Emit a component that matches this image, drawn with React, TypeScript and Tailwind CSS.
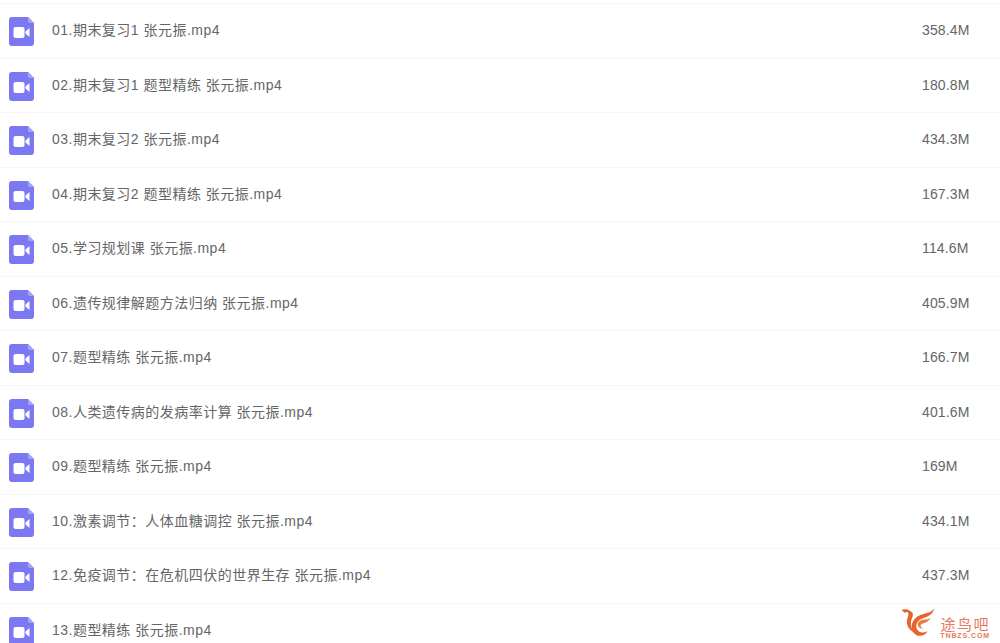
const files = [
  { name: "01.期末复习1 张元振.mp4", size: "358.4M" },
  { name: "02.期末复习1 题型精练 张元振.mp4", size: "180.8M" },
  { name: "03.期末复习2 张元振.mp4", size: "434.3M" },
  { name: "04.期末复习2 题型精练 张元振.mp4", size: "167.3M" },
  { name: "05.学习规划课 张元振.mp4", size: "114.6M" },
  { name: "06.遗传规律解题方法归纳 张元振.mp4", size: "405.9M" },
  { name: "07.题型精练 张元振.mp4", size: "166.7M" },
  { name: "08.人类遗传病的发病率计算 张元振.mp4", size: "401.6M" },
  { name: "09.题型精练 张元振.mp4", size: "169M" },
  { name: "10.激素调节：人体血糖调控 张元振.mp4", size: "434.1M" },
  { name: "12.免疫调节：在危机四伏的世界生存 张元振.mp4", size: "437.3M" },
  { name: "13.题型精练 张元振.mp4", size: "" },
]

const VideoIcon = () => (
  <svg width="25" height="29" viewBox="0 0 25 29" className="mt-[2px] shrink-0">
    <path d="M3 0H19L25 6V26a3 3 0 0 1-3 3H3a3 3 0 0 1-3-3V3a3 3 0 0 1 3-3Z" fill="#7b78f2" />
    <path d="M19 0L25 6H20.5a1.5 1.5 0 0 1-1.5-1.5Z" fill="#a5a3f7" />
    <rect x="4.5" y="10" width="11" height="11" rx="2" fill="#fff" />
    <path d="M16.5 14.5L20.5 11V20L16.5 16.5Z" fill="#fff" />
  </svg>
)

const Watermark = () => (
  <div className="absolute right-[10px] bottom-[3px] flex items-end gap-[1px]">
    <svg width="42" height="31" viewBox="0 0 36 32" className="mb-[2px]">
      <path d="M1 3C6 1 10 3 11 6 8 5 6 5 4 6Z" fill="#e8622c" />
      <path d="M7 5C12 3 14 7 12 11 10 15 10 21 14 26 9 24 5 18 7 12 8 9 9 7 7 5Z" fill="#e8622c" />
      <path d="M35 1C33 9 27 10 22 12 17 14 15 19 17 23 19 27 24 27 28 25 26 30 17 32 13 26 9 19 13 11 21 8 27 6 32 6 35 1Z" fill="#e8622c" />
      <path d="M31 11C29 16 24 16 21 18 20 20 22 22 24 22 20 23 17 20 18 16 21 12 27 14 31 11Z" fill="#ef7a3c" />
    </svg>
    <div className="flex flex-col items-center leading-none">
      <span className="text-[15px] leading-[15px] tracking-[1.5px] text-[#e67a5e]">途鸟吧</span>
      <span className="text-[7px] leading-[8px] font-bold tracking-[0.9px] text-[#e67a5e]">TNBZS.COM</span>
    </div>
  </div>
)

export default function App() {
  return (
    <div className="relative h-[643px] w-[1000px] overflow-hidden bg-white pt-[3px] font-['Liberation_Sans','Noto_Sans_CJK_SC',sans-serif] text-[14px] text-[#666]">
      {files.map((file) => (
        <div key={file.name} className="flex h-[54.5px] items-center border-t border-[#f7f7f7] pl-[9px]">
          <VideoIcon />
          <span className="ml-[18px] flex-1 tracking-[0.48px]">{file.name}</span>
          <span className="w-[78px] tracking-[0.15px]">{file.size}</span>
        </div>
      ))}
      <Watermark />
    </div>
  )
}
